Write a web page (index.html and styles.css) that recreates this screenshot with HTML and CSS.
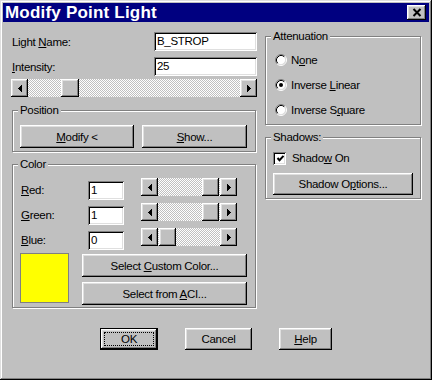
FILE: index.html
```html
<!DOCTYPE html>
<html>
<head>
<meta charset="utf-8">
<title>Modify Point Light</title>
<link rel="stylesheet" href="styles.css">
</head>
<body>
<div class="window">
  <div class="titlebar">
    <span class="title">Modify Point Light</span>
    <span class="close raised">
      <svg width="10" height="9" viewBox="0 0 10 9"><path d="M1.5 1l7 7M8.5 1l-7 7" stroke="#000" stroke-width="2"/></svg>
    </span>
  </div>
  <div class="content">
    <div class="main">
      <div class="left">
        <div class="field-row">
          <span class="label">Light <u>N</u>ame:</span>
          <span class="field wide">B_STROP</span>
        </div>
        <div class="field-row second">
          <span class="label"><u>I</u>ntensity:</span>
          <span class="field wide">25</span>
        </div>
        <div class="scroll intensity">
          <span class="arrow raised"><svg width="4" height="7" viewBox="0 0 4 7" shape-rendering="crispEdges"><path d="M0 3h1v1H0zM1 2h1v3H1zM2 1h1v5H2zM3 0h1v7H3z"/></svg></span>
          <span class="track"><span class="thumb raised big" style="margin-left:33px"></span></span>
          <span class="arrow raised"><svg width="4" height="7" viewBox="0 0 4 7" shape-rendering="crispEdges"><path d="M0 0h1v7H0zM1 1h1v5H1zM2 2h1v3H2zM3 3h1v1H3z"/></svg></span>
        </div>

        <div class="group position">
          <span class="group-label">Position</span>
          <div class="btn-row">
            <span class="btn raised modify"><span><u>M</u>odify &lt;</span></span>
            <span class="btn raised show"><span><u>S</u>how...</span></span>
          </div>
        </div>

        <div class="group color">
          <span class="group-label">Color</span>
          <div class="rgb-row">
            <span class="rgb-label"><u>R</u>ed:</span>
            <span class="field small">1</span>
            <div class="scroll mini">
              <span class="arrow raised"><svg width="4" height="7" viewBox="0 0 4 7" shape-rendering="crispEdges"><path d="M0 3h1v1H0zM1 2h1v3H1zM2 1h1v5H2zM3 0h1v7H3z"/></svg></span>
              <span class="track"><span class="thumb raised" style="margin-left:44px"></span></span>
              <span class="arrow raised"><svg width="4" height="7" viewBox="0 0 4 7" shape-rendering="crispEdges"><path d="M0 0h1v7H0zM1 1h1v5H1zM2 2h1v3H2zM3 3h1v1H3z"/></svg></span>
            </div>
          </div>
          <div class="rgb-row">
            <span class="rgb-label"><u>G</u>reen:</span>
            <span class="field small">1</span>
            <div class="scroll mini">
              <span class="arrow raised"><svg width="4" height="7" viewBox="0 0 4 7" shape-rendering="crispEdges"><path d="M0 3h1v1H0zM1 2h1v3H1zM2 1h1v5H2zM3 0h1v7H3z"/></svg></span>
              <span class="track"><span class="thumb raised" style="margin-left:44px"></span></span>
              <span class="arrow raised"><svg width="4" height="7" viewBox="0 0 4 7" shape-rendering="crispEdges"><path d="M0 0h1v7H0zM1 1h1v5H1zM2 2h1v3H2zM3 3h1v1H3z"/></svg></span>
            </div>
          </div>
          <div class="rgb-row">
            <span class="rgb-label"><u>B</u>lue:</span>
            <span class="field small">0</span>
            <div class="scroll mini">
              <span class="arrow raised"><svg width="4" height="7" viewBox="0 0 4 7" shape-rendering="crispEdges"><path d="M0 3h1v1H0zM1 2h1v3H1zM2 1h1v5H2zM3 0h1v7H3z"/></svg></span>
              <span class="track"><span class="thumb raised" style="margin-left:1px"></span></span>
              <span class="arrow raised"><svg width="4" height="7" viewBox="0 0 4 7" shape-rendering="crispEdges"><path d="M0 0h1v7H0zM1 1h1v5H1zM2 2h1v3H2zM3 3h1v1H3z"/></svg></span>
            </div>
          </div>
          <div class="color-bottom">
            <span class="swatch"></span>
            <div class="color-btns">
              <span class="btn raised"><span>Select <u>C</u>ustom Color...</span></span>
              <span class="btn raised"><span>Select from <u>A</u>CI...</span></span>
            </div>
          </div>
        </div>
      </div>

      <div class="right">
        <div class="group atten">
          <span class="group-label">Attenuation</span>
          <div class="radio-row">
            <svg class="radio" width="12" height="12" viewBox="0 0 12 12"><circle cx="6" cy="6" r="4.5" fill="#fff"/><path d="M2.11 9.89A5.5 5.5 0 0 1 9.89 2.11" fill="none" stroke="#808080"/><path d="M9.89 2.11A5.5 5.5 0 0 1 2.11 9.89" fill="none" stroke="#fff"/><path d="M2.82 9.18A4.5 4.5 0 0 1 9.18 2.82" fill="none" stroke="#000"/><path d="M9.18 2.82A4.5 4.5 0 0 1 2.82 9.18" fill="none" stroke="#dfdfdf"/></svg>
            <span>N<u>o</u>ne</span>
          </div>
          <div class="radio-row">
            <svg class="radio" width="12" height="12" viewBox="0 0 12 12"><circle cx="6" cy="6" r="4.5" fill="#fff"/><path d="M2.11 9.89A5.5 5.5 0 0 1 9.89 2.11" fill="none" stroke="#808080"/><path d="M9.89 2.11A5.5 5.5 0 0 1 2.11 9.89" fill="none" stroke="#fff"/><path d="M2.82 9.18A4.5 4.5 0 0 1 9.18 2.82" fill="none" stroke="#000"/><path d="M9.18 2.82A4.5 4.5 0 0 1 2.82 9.18" fill="none" stroke="#dfdfdf"/><circle cx="6" cy="6" r="2" fill="#000"/></svg>
            <span>Inverse <u>L</u>inear</span>
          </div>
          <div class="radio-row">
            <svg class="radio" width="12" height="12" viewBox="0 0 12 12"><circle cx="6" cy="6" r="4.5" fill="#fff"/><path d="M2.11 9.89A5.5 5.5 0 0 1 9.89 2.11" fill="none" stroke="#808080"/><path d="M9.89 2.11A5.5 5.5 0 0 1 2.11 9.89" fill="none" stroke="#fff"/><path d="M2.82 9.18A4.5 4.5 0 0 1 9.18 2.82" fill="none" stroke="#000"/><path d="M9.18 2.82A4.5 4.5 0 0 1 2.82 9.18" fill="none" stroke="#dfdfdf"/></svg>
            <span>Inverse S<u>q</u>uare</span>
          </div>
        </div>

        <div class="group shadows">
          <span class="group-label">Shadows:</span>
          <div class="check-row">
            <span class="checkbox"><svg width="9" height="9" viewBox="0 0 9 9"><path d="M1.5 4l2 2.2 4-4.4" fill="none" stroke="#000" stroke-width="2"/></svg></span>
            <span>Shado<u>w</u> On</span>
          </div>
          <span class="btn raised shadow-btn"><span>Shadow O<u>p</u>tions...</span></span>
        </div>
      </div>
    </div>

    <div class="actions">
      <span class="btn default ok"><span class="focus">OK</span></span>
      <span class="btn raised cancel">Cancel</span>
      <span class="btn raised help"><span><u>H</u>elp</span></span>
    </div>
  </div>
</div>
</body>
</html>
```

FILE: styles.css
```css
* { box-sizing: border-box; }

html, body {
  margin: 0;
  padding: 0;
}

body {
  width: 432px;
  height: 380px;
  overflow: hidden;
  background: #c0c0c0;
  color: #000;
  font-family: "Liberation Sans", Arial, sans-serif;
  font-size: 11.5px;
  letter-spacing: -0.3px;
  line-height: 14px;
}

u { text-decoration: underline; text-underline-offset: 1px; }

.window {
  width: 432px;
  height: 380px;
  padding: 3px;
  background: #c0c0c0;
  box-shadow: inset -1px -1px #000, inset 1px 1px #dfdfdf, inset -2px -2px #808080, inset 2px 2px #fff;
  display: flex;
  flex-direction: column;
}

.raised {
  background: #c0c0c0;
  box-shadow: inset -1px -1px #000, inset 1px 1px #fff, inset -2px -2px #808080, inset 2px 2px #dfdfdf;
}

.titlebar {
  height: 19px;
  background: #000080;
  display: flex;
  align-items: center;
  justify-content: space-between;
  padding: 0 3px 0 2px;
}

.title {
  color: #fff;
  font-family: "Liberation Sans", Arial, sans-serif;
  font-weight: bold;
  font-size: 17px;
  letter-spacing: 0.2px;
  line-height: 19px;
}

.close {
  width: 19px;
  height: 15px;
  display: flex;
  align-items: center;
  justify-content: center;
}

.content {
  padding: 10px 8px 0 8px;
  display: flex;
  flex-direction: column;
}

.main {
  display: flex;
  gap: 8px;
  align-items: flex-start;
}

.left {
  width: 246px;
  display: flex;
  flex-direction: column;
}

.right {
  width: 156px;
  display: flex;
  flex-direction: column;
  padding-top: 4px;
}

.field-row {
  display: flex;
  align-items: center;
  justify-content: space-between;
  height: 19px;
}

.field-row.second { margin-top: 6px; }

.label { padding-left: 1px; }

.field {
  display: block;
  height: 19px;
  background: #fff;
  box-shadow: inset 1px 1px #808080, inset -1px -1px #fff, inset 2px 2px #000, inset -2px -2px #dfdfdf;
  padding: 0 3px;
  line-height: 19px;
  white-space: nowrap;
}

.field.wide { width: 103px; }
.field.small { width: 36px; }

.scroll {
  display: flex;
  height: 18px;
}

.scroll.intensity {
  margin-top: 3px;
  width: 246px;
}

.arrow {
  width: 17px;
  height: 18px;
  flex: none;
  display: flex;
  align-items: center;
  justify-content: center;
}

.track {
  flex: 1;
  display: flex;
  background: repeating-conic-gradient(#c0c0c0 0 25%, #fff 0 50%) 0 0 / 2px 2px;
}

.thumb {
  width: 17px;
  height: 18px;
  flex: none;
}

.thumb.big { width: 18px; }

.group {
  position: relative;
  border: 1px solid #808080;
  box-shadow: inset 1px 1px #fff, 1px 1px #fff;
}

.group-label {
  position: absolute;
  top: -8px;
  left: 5px;
  padding: 0 2px;
  background: #c0c0c0;
  line-height: 14px;
}

.position {
  margin: 13px 0 0 1px;
  width: 244px;
  padding: 14px 7px 3px 7px;
}

.btn-row {
  display: flex;
  gap: 8px;
}

.btn {
  height: 23px;
  display: flex;
  align-items: center;
  justify-content: center;
  white-space: nowrap;
}

.modify { width: 114px; }
.show { width: 105px; }

.color {
  margin: 12px 0 0 1px;
  width: 244px;
  padding: 16px 7px 2px 7px;
}

.rgb-row {
  display: flex;
  align-items: flex-start;
  height: 19px;
}

.rgb-row + .rgb-row { margin-top: 6px; }

.rgb-label {
  width: 68px;
  line-height: 19px;
  padding-left: 1px;
}

.scroll.mini {
  width: 96px;
  margin-left: 17px;
  margin-top: -3px;
}

.color-bottom {
  display: flex;
  margin-top: 3px;
}

.swatch {
  width: 49px;
  height: 50px;
  background: #ffff00;
  border: 1px solid #808080;
}

.color-btns {
  margin: 1px 0 0 13px;
  width: 165px;
  display: flex;
  flex-direction: column;
  gap: 5px;
}

.atten {
  height: 89px;
  padding: 16px 0 0 9px;
  display: flex;
  flex-direction: column;
  gap: 11px;
}

.radio-row {
  display: flex;
  align-items: center;
  height: 14px;
  gap: 4px;
}

.radio { flex: none; }

.shadows {
  margin-top: 12px;
  padding: 13px 7px 3px 7px;
}

.check-row {
  display: flex;
  align-items: center;
  height: 14px;
  gap: 6px;
}

.checkbox {
  width: 13px;
  height: 13px;
  background: #fff;
  box-shadow: inset 1px 1px #808080, inset -1px -1px #fff, inset 2px 2px #000, inset -2px -2px #dfdfdf;
  display: flex;
  align-items: center;
  justify-content: center;
  padding: 1px 0 0 1px;
}

.shadow-btn {
  margin-top: 8px;
  width: 140px;
  height: 22px;
}

.actions {
  margin-top: 20px;
  display: flex;
  justify-content: center;
  gap: 27px;
}

.actions .btn { height: 22px; }

.default {
  width: 58px;
  border: 1px solid #000;
  background: #c0c0c0;
  box-shadow: inset -1px -1px #000, inset 1px 1px #fff, inset -2px -2px #808080, inset 2px 2px #dfdfdf;
  padding: 3px;
  align-items: stretch;
}

.focus {
  flex: 1;
  border: 1px dotted #000;
  display: flex;
  align-items: center;
  justify-content: center;
}

.cancel { width: 67px; }
.help { width: 53px; }
```
